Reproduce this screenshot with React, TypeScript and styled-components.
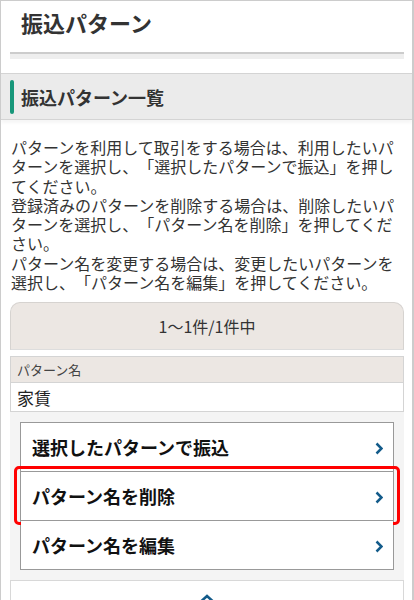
import React from "react";
import styled, {createGlobalStyle} from "styled-components";

const GlobalStyle = createGlobalStyle`
  html, body {
    margin: 0;
    padding: 0;
    background: #ffffff;
  }
  body {
    font-family: "Noto Sans CJK JP", "Noto Sans", sans-serif;
    color: #333333;
    text-spacing-trim: space-all;
  }
`

const Frame = styled.div`
  box-sizing: border-box;
  width: 414px;
  height: 600px;
  border: 1px solid #cccccc;
  border-right-width: 2px;
  border-bottom: none;
  overflow: hidden;
`

const TitleBlock = styled.div`
  padding: 8px 8px 0 9px;
`

const PageTitle = styled.h1`
  margin: 0;
  padding-left: 11px;
  font-size: 22px;
  line-height: 26px;
  font-weight: 700;
  color: #333333;
`

const TitleRule = styled.div`
  margin-top: 17px;
  height: 5px;
  border-top: 2px solid #cccccc;
  background: #eeeeee;
`

const SectionHead = styled.h2`
  display: flex;
  align-items: center;
  gap: 7px;
  margin: 14px 0 0;
  height: 45px;
  padding-left: 9px;
  background: #ebebeb;
  border-top: 1px solid #d4d4d4;
  border-bottom: 1px solid #d4d4d4;
  box-shadow: 0 3px 3px rgba(0, 0, 0, 0.04);
  font-size: 18px;
  line-height: 22px;
  font-weight: 700;
  color: #333333;

  &::before {
    content: "";
    display: block;
    width: 4px;
    height: 34px;
    border-radius: 2px;
    background: #17977a;
  }
`

const Content = styled.div`
  padding: 0 8px 0 9px;
`

const Lead = styled.p`
  margin: 18px 0 0;
  padding-left: 1px;
  font-size: 16px;
  line-height: 19.3px;
  color: #333333;
  text-spacing-trim: space-all;
`

const CountBox = styled.div`
  margin-top: 10px;
  height: 46px;
  display: flex;
  align-items: center;
  justify-content: center;
  background: #ece7e3;
  border: 1px solid #d6d3d0;
  border-bottom-color: #dddddd;
  border-radius: 10px 10px 0 0;
  font-size: 16px;
  color: #333333;
`

const PatternTable = styled.div`
  margin-top: 6px;
  border: 1px solid #d4d4d4;
`

const TableHead = styled.div`
  height: 25px;
  display: flex;
  align-items: center;
  padding-left: 6px;
  background: #ece7e3;
  border-bottom: 1px solid #d4d4d4;
  font-size: 13px;
  color: #444444;
`

const TableCell = styled.div`
  height: 28px;
  display: flex;
  align-items: center;
  padding-left: 6px;
  background: #ffffff;
  font-size: 17px;
  color: #222222;
`

const ActionArea = styled.div`
  background: #f4f4f4;
  padding: 10px;
`

const ActionList = styled.div`
  border: 1px solid #999999;
  background: #ffffff;
`

const ActionButton = styled.button<{ $highlight?: boolean }>`
  position: relative;
  display: flex;
  align-items: center;
  justify-content: space-between;
  box-sizing: border-box;
  width: 100%;
  height: 49px;
  padding: 0 10px 0 11px;
  border: none;
  border-bottom: 1px solid #999999;
  background: #ffffff;
  font-family: "Noto Sans CJK JP", "Noto Sans", sans-serif;
  font-size: 18px;
  font-weight: 700;
  color: #111111;
  cursor: pointer;

  &:last-child {
    height: 48px;
    border-bottom: none;
  }

  &::after {
    content: "";
    display: ${p => p.$highlight ? "block" : "none"};
    position: absolute;
    left: -7px;
    right: -7px;
    top: -6px;
    bottom: -5px;
    border: 3px solid #ff0000;
    border-radius: 5px;
    pointer-events: none;
  }
`

const Chevron = styled.svg`
  width: 8px;
  height: 13px;
  flex: none;
  margin-top: 2px;
`

const FooterBox = styled.div`
  height: 40px;
  display: flex;
  justify-content: center;
  padding-top: 13px;
  background: #ffffff;
  border: 1px solid #d8d8d8;
`

const ChevronRight = () => (
    <Chevron viewBox="0 0 8 13">
        <polyline points="1.5,1.5 6.5,6.5 1.5,11.5" fill="none" stroke="#135b8a" strokeWidth="2.5"/>
    </Chevron>
)

const actions = [
    {label: "選択したパターンで振込", highlight: false},
    {label: "パターン名を削除", highlight: true},
    {label: "パターン名を編集", highlight: false},
]

export default function App() {
    return (
        <>
            <GlobalStyle/>
            <Frame>
                <TitleBlock>
                    <PageTitle>振込パターン</PageTitle>
                    <TitleRule/>
                </TitleBlock>
                <SectionHead>振込パターン一覧</SectionHead>
                <Content>
                    <Lead>
                        パターンを利用して取引をする場合は、利用したいパターンを選択し、「選択したパターンで振込」を押してください。<br/>
                        登録済みのパターンを削除する場合は、削除したいパターンを選択し、「パターン名を削除」を押してください。<br/>
                        パターン名を変更する場合は、変更したいパターンを選択し、「パターン名を編集」を押してください。
                    </Lead>
                    <CountBox>1～1件/1件中</CountBox>
                    <PatternTable>
                        <TableHead>パターン名</TableHead>
                        <TableCell>家賃</TableCell>
                    </PatternTable>
                    <ActionArea>
                        <ActionList>
                            {actions.map(a => (
                                <ActionButton key={a.label} $highlight={a.highlight}>
                                    {a.label}
                                    <ChevronRight/>
                                </ActionButton>
                            ))}
                        </ActionList>
                    </ActionArea>
                    <FooterBox>
                        <svg width="14" height="8" viewBox="0 0 14 8">
                            <polyline points="1.5,7 7,2 12.5,7" fill="none" stroke="#135b8a" strokeWidth="2.6"/>
                        </svg>
                    </FooterBox>
                </Content>
            </Frame>
        </>
    )
}
